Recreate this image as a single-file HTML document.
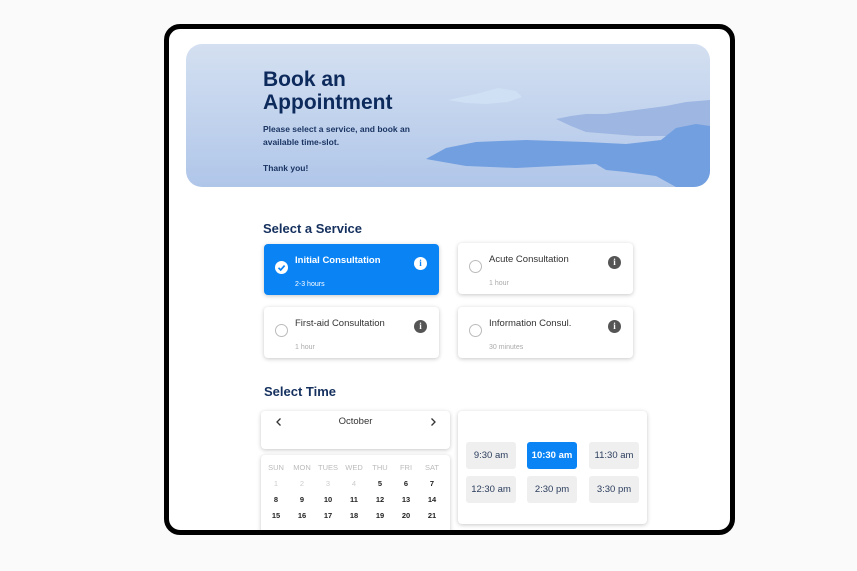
<!DOCTYPE html>
<html><head><style>
*{box-sizing:border-box;margin:0;padding:0}
body{width:857px;height:571px;background:#fafafa;font-family:"Liberation Sans",sans-serif;position:relative;overflow:hidden}
.frame{position:absolute;left:164px;top:24px;width:571px;height:511px;border:5px solid #000;border-radius:16px;background:#fff;overflow:hidden}
.abs{position:absolute}
.banner{left:17px;top:15px;width:524px;height:143px;border-radius:16px;background:linear-gradient(#d4e0f1,#b0c6e9);overflow:hidden}
h1{font-size:21px;line-height:23px;color:#0d2a5c;font-weight:bold}
.sub{font-size:8.5px;color:#1b3563;font-weight:bold;line-height:13px}
.h2{font-size:13px;color:#15305e;font-weight:bold}
.card{position:absolute;width:175px;height:51px;background:#fff;border-radius:4px;box-shadow:0 1px 4px rgba(0,0,0,.22)}
.card .t{position:absolute;left:31px;top:11px;font-size:9.5px;color:#333}
.card .s{position:absolute;left:31px;top:37px;font-size:7px;color:#aaa}
.card .r{position:absolute;left:11px;top:17px;width:13px;height:13px;border:1px solid #bbb;border-radius:50%}
.card .i{position:absolute;left:150px;top:13px;width:13px;height:13px;border-radius:50%;background:#555;color:#fff;font-size:9px;font-weight:bold;text-align:center;line-height:13px;font-family:"Liberation Serif",serif}
.sel{background:#0a84f5}
.sel .t,.sel .s{color:#fff}
.box{position:absolute;background:#fff;border-radius:4px;box-shadow:0 1px 4px rgba(0,0,0,.22)}
.tb{position:absolute;width:50px;height:27px;background:#efefef;border-radius:3px;font-size:9.5px;color:#2c3e5e;text-align:center;line-height:27px}
.cal{font-size:7.5px;text-align:center;font-weight:bold;color:#222}
.cal td{width:26px;height:16px}
</style></head><body>
<div class="frame">
 <div class="abs banner">
  <svg class="abs" style="left:0;top:0" width="524" height="143">
   <path d="M262 56 L290 50 L312 44 L330 47 L336 53 L322 58 L300 60 L280 59Z" fill="#cfe0f4"/>
   <path d="M370 75 L385 72 L400 70 L420 70 L450 66 L480 62 L500 58 L524 56 L524 92 L490 92 L450 92 L400 88 L385 82Z" fill="#9db6e2"/>
   <path d="M240 115 L260 104 L290 98 L340 96 L400 98 L440 100 L475 96 L490 84 L510 80 L524 82 L524 143 L490 143 L470 132 L440 128 L420 126 L410 120 L330 124 L280 122 Z" fill="#729fe0"/>
  </svg>
  <h1 class="abs" style="left:77px;top:24px">Book an<br>Appointment</h1>
  <div class="abs sub" style="left:77px;top:79px">Please select a service, and book an<br>available time-slot.<br><br>Thank you!</div>
 </div>
 <div class="abs h2" style="left:94px;top:192px">Select a Service</div>
 <div class="card sel" style="left:95px;top:215px"><svg class="abs" style="left:11px;top:17px" width="13" height="13"><circle cx="6.5" cy="6.5" r="6.5" fill="#fff"/><path d="M3.5 6.8 L5.7 9 L9.6 4.6" stroke="#0a84f5" stroke-width="1.7" fill="none"/></svg><div class="t" style="font-weight:bold">Initial Consultation</div><div class="s">2-3 hours</div><div class="i" style="background:#fff;color:#0a84f5">i</div></div>
 <div class="card" style="left:289px;top:214px"><div class="r"></div><div class="t">Acute Consultation</div><div class="s">1 hour</div><div class="i">i</div></div>
 <div class="card" style="left:95px;top:278px"><div class="r"></div><div class="t">First-aid Consultation</div><div class="s">1 hour</div><div class="i">i</div></div>
 <div class="card" style="left:289px;top:278px"><div class="r"></div><div class="t">Information Consul.</div><div class="s">30 minutes</div><div class="i">i</div></div>
 <div class="abs h2" style="left:95px;top:355px">Select Time</div>
 <div class="box" style="left:92px;top:382px;width:189px;height:38px">
  <svg class="abs" style="left:14px;top:6px" width="8" height="10"><path d="M5.5 1.5 L2 5 L5.5 8.5" stroke="#333" stroke-width="1.3" fill="none"/></svg>
  <div class="abs" style="left:0;width:189px;top:5px;text-align:center;font-size:9.5px;color:#333">October</div>
  <svg class="abs" style="left:168px;top:6px" width="8" height="10"><path d="M2.5 1.5 L6 5 L2.5 8.5" stroke="#333" stroke-width="1.3" fill="none"/></svg>
 </div>
 <div class="box" style="left:92px;top:426px;width:189px;height:80px">
  <table class="cal abs" style="left:2px;top:4px;border-collapse:collapse">
   <tr style="color:#bbb;font-weight:normal"><td>SUN</td><td>MON</td><td>TUES</td><td>WED</td><td>THU</td><td>FRI</td><td>SAT</td></tr>
   <tr><td style="color:#ccc;font-weight:normal">1</td><td style="color:#ccc;font-weight:normal">2</td><td style="color:#ccc;font-weight:normal">3</td><td style="color:#ccc;font-weight:normal">4</td><td>5</td><td>6</td><td>7</td></tr>
   <tr><td>8</td><td>9</td><td>10</td><td>11</td><td>12</td><td>13</td><td>14</td></tr>
   <tr><td>15</td><td>16</td><td>17</td><td>18</td><td>19</td><td>20</td><td>21</td></tr>
  </table>
 </div>
 <div class="box" style="left:289px;top:382px;width:189px;height:113px">
  <div class="tb" style="left:8px;top:31px">9:30 am</div>
  <div class="tb" style="left:69px;top:31px;background:#0a84f5;color:#fff;font-weight:bold">10:30 am</div>
  <div class="tb" style="left:131px;top:31px">11:30 am</div>
  <div class="tb" style="left:8px;top:65px">12:30 am</div>
  <div class="tb" style="left:69px;top:65px">2:30 pm</div>
  <div class="tb" style="left:131px;top:65px">3:30 pm</div>
 </div>
</div>
</body></html>
